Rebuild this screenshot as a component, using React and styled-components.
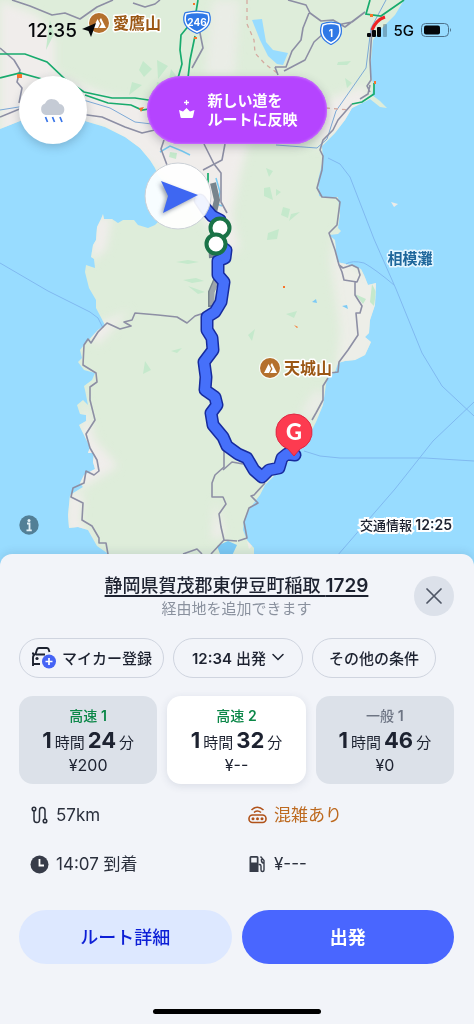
import React from "react";
import styled, { createGlobalStyle } from "styled-components";

const Global = createGlobalStyle`
  *, *::before, *::after { box-sizing: border-box; }
  body { margin: 0; background: #f2f4f9; }
  body, button {
    font-family: Inter, "Noto Sans CJK JP", sans-serif;
    color: #1d2230;
  }
  button { margin: 0; padding: 0; border: 0; background: none; cursor: pointer; }
  svg { display: block; }
`;

const Screen = styled.main`
  display: flex;
  flex-direction: column;
  min-height: 100vh;
`;

/* ---------- map ---------- */

const MapArea = styled.section`
  position: relative;
  flex: 1;
  min-height: 480px;
  display: flex;
  flex-direction: column;
  isolation: isolate;
  overflow: hidden;
  background: #98dcff;
`;

const MapCanvas = styled.svg`
  position: absolute;
  inset: 0;
  z-index: -1;
  width: 100%;
  height: 100%;
`;

const StatusBar = styled.header`
  display: flex;
  align-items: center;
  height: 60px;
  padding: 0 22px 0 28px;
  color: #05070a;
`;

const Clock = styled.time`
  font-size: 19px;
  font-weight: 500;
  margin-right: 5px;
`;

const StatusIcons = styled.div`
  display: flex;
  align-items: center;
  gap: 7px;
  margin-left: auto;
  font-size: 15px;
  font-weight: 500;
`;

const MapControls = styled.div`
  display: grid;
  grid-template-columns: 1fr auto 1fr;
  padding: 16px 19px 0;
`;

const WeatherButton = styled.button`
  display: grid;
  place-items: center;
  width: 68px;
  height: 68px;
  border-radius: 50%;
  background: #fff;
  box-shadow: 0 3px 10px rgba(40, 60, 80, 0.25);
`;

const NewRoadButton = styled.button`
  display: flex;
  align-items: center;
  gap: 12px;
  height: 68px;
  padding: 0 29px 0 31px;
  border-radius: 34px;
  background: #b544ff;
  box-shadow: inset 0 0 2px 1px #c76bff, 0 3px 10px rgba(60, 60, 80, 0.3);
  color: #fff;
  font-size: 15px;
  font-weight: 700;
  line-height: 19px;
  text-align: left;
`;

const MapFooter = styled.div`
  display: flex;
  justify-content: space-between;
  align-items: center;
  margin-top: auto;
  padding: 0 22px 31px 19px;
`;

const InfoButton = styled.button`
  width: 20px;
  height: 20px;
`;

const TrafficTime = styled.span`
  color: #1d2230;
  font-size: 13px;
  font-weight: 500;
  line-height: 20px;
  -webkit-text-stroke: 4px #fff;
  paint-order: stroke fill;

  time {
    font-size: 14px;
    font-weight: 600;
  }
`;

/* ---------- bottom sheet ---------- */

const Sheet = styled.section`
  position: relative;
  margin-top: -12px;
  padding: 20px 20px 10px 19px;
  border-radius: 12px 12px 0 0;
  background: #f2f4f9;
  box-shadow: 0 -2px 8px rgba(30, 60, 90, 0.12);
`;

const SheetHeader = styled.div`
  display: grid;
  grid-template-columns: 40px 1fr 40px;
  align-items: start;
  text-align: center;
`;

const Destination = styled.a`
  color: #1d2230;
  font-size: 18px;
  font-weight: 500;
  line-height: 24px;
  white-space: nowrap;
  text-decoration: underline;
  text-decoration-thickness: 2px;
  text-underline-offset: 3px;

  span {
    font-size: 19px;
    font-weight: 600;
  }
`;

const Headings = styled.div`
  grid-column: 2;
  display: flex;
  flex-direction: column;
  align-items: center;
`;

const Hint = styled.p`
  margin: 0;
  color: #8a919e;
  font-size: 15px;
  line-height: 22px;
`;

const CloseButton = styled.button`
  display: grid;
  place-items: center;
  width: 40px;
  height: 40px;
  margin-top: 2px;
  border-radius: 50%;
  background: #dce1ea;
`;

const Chips = styled.div`
  display: flex;
  gap: 9px;
  margin-top: 18px;
`;

const Chip = styled.button`
  display: flex;
  align-items: center;
  gap: 6px;
  height: 40px;
  padding: 0 ${(p) => p.$pad || 16}px 2px;
  border: 1px solid #cfd4df;
  border-radius: 20px;
  font-size: 15px;
  font-weight: 500;
  white-space: nowrap;

  time {
    font-weight: 600;
  }
`;

const Routes = styled.div`
  display: grid;
  grid-template-columns: repeat(3, 1fr);
  gap: 10px;
  margin-top: 18px;
`;

const RouteCard = styled.button`
  display: flex;
  flex-direction: column;
  align-items: center;
  height: 88px;
  padding: 8px 0;
  border-radius: 14px;
  background: ${(p) => (p.$active ? "#fff" : "#dce1e9")};
  box-shadow: ${(p) => (p.$active ? "0 2px 8px rgba(40, 60, 90, 0.12)" : "none")};
`;

const RouteName = styled.span`
  color: ${(p) => (p.$toll ? "#0b8748" : "#6d7483")};
  font-size: 14px;
  font-weight: 500;
  line-height: 24px;

  b {
    font-weight: 600;
  }
`;

const Duration = styled.span`
  display: flex;
  align-items: baseline;
  gap: 3px;
  font-size: 15px;
  line-height: 24px;
  white-space: nowrap;

  b {
    font-size: 22px;
    font-weight: 700;
  }
`;

const Price = styled.span`
  font-size: 16px;
  line-height: 20px;
`;

const Facts = styled.ul`
  display: grid;
  grid-template-columns: 1fr 1fr;
  gap: 25px 12px;
  margin: 19px 0 0;
  padding: 0 0 0 11px;
  list-style: none;
`;

const Fact = styled.li`
  display: flex;
  align-items: center;
  gap: 7px;
  color: ${(p) => (p.$warn ? "#bd6a20" : "#2b303d")};
  font-size: 17px;
  line-height: 24px;
`;

const Actions = styled.div`
  display: grid;
  grid-template-columns: 1fr 1fr;
  gap: 10px;
  margin-top: 34px;
`;

const ActionButton = styled.button`
  height: 54px;
  padding-bottom: 2px;
  border-radius: 27px;
  background: ${(p) => (p.$primary ? "#4966ff" : "#dde8ff")};
  color: ${(p) => (p.$primary ? "#fff" : "#0d1fd6")};
  font-size: 18px;
  font-weight: ${(p) => (p.$primary ? 700 : 500)};
`;

const HomeIndicator = styled.div`
  width: 168px;
  height: 5px;
  margin: 45px auto 0;
  border-radius: 3px;
  background: #000;
`;

/* ---------- drawings ---------- */

const ROUTE =
  "M200 200L206 209L212 216L220 220L220 228L216 243L226 250L225 258L218 261L218 275L224 282L221 302L215 312L207 317L207 330L212 338L213 350L204 362L206 377L205 390L215 397L217 405L211 413L213 425L223 437L227 446L238 454L247 458L254 470L262 477L269 470L279 468L282 458L287 454L295 455";

function Mountain({ x, y, name }) {
  return (
    <g transform={`translate(${x} ${y})`}>
      <circle r="11" fill="#fff" opacity=".8" />
      <circle r="10" fill="#b4702d" />
      <path d="M-6 5L-1.500-4L1 .500L-1 5ZM0 5L2.500 1L.500-3L2-5L7 5Z" fill="#fff" />
      <text
        x="14"
        y="6"
        fontSize="16"
        fontWeight="700"
        fill="#9b5714"
        stroke="#fff"
        strokeWidth="3"
        strokeLinejoin="round"
        paintOrder="stroke"
      >
        {name}
      </text>
    </g>
  );
}

function Shield({ x, y, w, label }) {
  const outline = `M${-w}-8Q0-11 ${w}-8Q${w + 4} 4 0 10Q${-w - 4} 4 ${-w}-8Z`;
  return (
    <g transform={`translate(${x} ${y})`} strokeLinejoin="round">
      <path d={outline} fill="#2f78e6" stroke="#2f78e6" strokeWidth="4" />
      <path d={outline} fill="#2f78e6" stroke="#fff" strokeWidth="1.500" />
      <text y="4" textAnchor="middle" fontSize="10" fontWeight="700" fill="#fff">
        {label}
      </text>
    </g>
  );
}

function IzuMap() {
  return (
    <MapCanvas viewBox="0 0 474 566" preserveAspectRatio="xMidYMin slice" role="img" aria-label="地図">
      <defs>
        <filter id="soft" x="-20%" y="-20%" width="140%" height="140%">
          <feGaussianBlur stdDeviation="5" />
        </filter>
        <filter id="shade" x="-20%" y="-20%" width="140%" height="140%">
          <feGaussianBlur stdDeviation="2" />
        </filter>
        <clipPath id="land">
          <path d="M0 0H404L395 15L381 29L373 40L371 60L370 75L374 85L372 95L380 101L387 108L380 107L370 99L352 108L345 120L335 133L322 146L323 160L318 180L319 196L326 198L338 197L340 215L338 228L341 231L338 234L329 235L335 240L337 262L350 265L361 269L364 275L368 285L376 283L375 305L370 320L369 333L365 337L371 342L365 355L355 360L345 361L338 363L335 372L327 378L323 405L316 422L312 430L300 440L295 456L285 465L265 485L260 495L250 508L244 520L243 530L247 540L254 548L254 566H110L107 553L97 546L88 530L78 527L69 528L68 515L70 495L83 487L80 483L84 475L95 469L93 462L94 453L88 453L90 447L84 435L79 425L86 421L86 415L80 414L77 405L83 400L88 405L85 390L84 386L92 380L95 373L84 370L78 362L82 358L80 350L84 345L98 330L105 325L96 308L96 300L89 288L85 272L86 265L95 268L94 259L91 257L93 245L96 240L97 227L101 219L103 214L104 219L112 219L118 223L123 220L134 220L138 225L148 228L155 225L175 205L172 192L158 175L155 168L150 160L140 148L125 137L105 127L85 121L55 116L20 121L0 129Z" />
        </clipPath>
      </defs>
      <rect width="474" height="566" fill="#98dcff" />
      <g clipPath="url(#land)">
        <rect width="474" height="566" fill="#deedda" />
        <g fill="#f0edeb" filter="url(#soft)">
          <path d="M0 0L38 15L55 40L55 72L85 86L110 96L155 104L235 108L250 138L240 175L232 215L240 250L222 250L190 200L150 165L100 125L0 135Z" />
          <path d="M212 0H240L235 75H205Z" opacity=".7" />
          <path d="M330 98L365 85L370 112L340 130L315 150L320 120Z" />
          <path d="M335 230L358 270L385 280L378 345L370 365L335 375L340 330L330 260Z" opacity=".8" />
          <path d="M315 390L330 395L315 420L300 412Z" opacity=".7" />
          <path d="M95 215L112 217L106 250L90 262ZM85 330L130 310L98 345ZM85 400L95 440L118 466L80 490L76 475Z" />
          <path d="M68 490L84 495L80 520L95 545L66 530ZM215 500L225 535L212 540Z" />
        </g>
        <g fill="#c5e9cc">
          <path d="M143 61L152 69L144 77L139 70ZM157 60L168 66L158 79ZM171 69L179 79L168 84ZM132 82L142 85L129 95ZM157 82L168 85L155 96ZM168 88L178 96L170 98ZM50 20L54 34L46 50L48 32ZM170 152L177 153L176 159L169 157Z" />
          <path d="M338 62L351 61L347 65L337 65ZM345 78L352 83L347 88ZM266 168L273 171L269 177ZM264 188L270 187L273 200L264 196ZM276 189L281 192L276 196ZM283 207L290 209L288 218L281 215ZM291 214L300 212L289 221ZM268 233L279 229L277 239L267 240Z" />
          <path d="M176 262L188 260L199 262L188 264ZM183 280L196 278L204 281L192 283ZM188 286L205 292L198 294ZM145 361L151 370L143 374ZM171 351L182 348L177 353ZM372 284L376 292L374 306L370 302ZM355 294L366 299L363 304ZM286 314L297 311L294 318ZM248 335L255 329L252 341Z" />
        </g>
        <path d="M252 20L262 19L266 42L273 50L288 53L283 65L277 64L268 56L260 40Z" fill="#98dcff" />
        <path d="M312 302L316 299L317 303ZM342 306L347 305L348 309ZM217 546L228 541L237 545L230 560L220 554Z" fill="#7ccaf5" />
      </g>
      <path d="M391 202L398 204L394 207ZM247 541L252 546L249 549Z" fill="#eeece8" />

      <g fill="none" stroke="#80b9f0" strokeWidth="1">
        <path d="M0 263L48 291L90 312L98 318L103 328" />
        <path d="M328 158L340 164L350 177L374 239L396 289L422 353L442 386L474 416" />
        <path d="M346 264Q352 260 364 263Q375 269 394 285" />
        <path d="M304 451L320 456L340 458H425L474 461M474 402L433 441L395 489L337 556" />
        <path d="M0 110L25 106M80 99L110 108L135 122L160 125M276 145L317 148L327 139L336 111L366 68L371 28L386 0" stroke="#7ca9d6" />
      </g>
      <path d="M160 152L170 146L182 151L190 155M216 178L220 192L217 204L222 206" fill="none" stroke="#78cbf2" strokeWidth="1.500" />
      <path d="M247 0V24L254 40L255 53L265 64L280 75M326 108L350 110" fill="none" stroke="#d4aaa0" strokeWidth="1.300" strokeDasharray="4 4" />
      <g fill="none" stroke="#8d8fa4" strokeWidth="1.600" strokeLinejoin="round">
        <path d="M12 0L30 6L52 15L65 13L80 19L97 7L113 0M133 3L145 7L155 4L160 0M0 48L14 60L20 70L17 82L22 88L19 103M0 117L22 108M80 114L102 117L125 127L142 133L159 129M199 28L203 48L192 68M164 140L161 149L167 165M204 144L214 164L221 173L221 202L227 213M225 144L222 160L203 170" />
        <path d="M288 0L306 5L310 13L321 21L333 20L345 27L365 12M309 13L303 28L301 40L292 51L286 67H275M275 67L278 75M365 12L352 22L332 26L314 42L305 60L284 71" />
        <path d="M372 28L370 60L371 80L367 86L370 92M352 104L338 120L333 130L323 140L320 150L323 156L322 170L317 188L322 197L336 198L340 202L337 225L329 233L335 250L339 265L343 268L352 265L358 268L360 275L357 282L344 280L342 272L339 265M355 282L355 295L362 306L360 313L356 313L358 335L348 350L339 362L338 372L330 373M328 378L323 386L323 400L316 413L312 420M265 483L254 495L251 496L258 503L249 508L244 522L247 538L238 541M370 85L368 94L360 99" />
        <path d="M204 313L195 316L187 323L177 317L158 315L135 313L132 320L124 322L131 326L120 329L107 323L98 332L91 343L88 339L84 345L83 365L96 373L97 382L90 387L90 400L95 420L86 434L90 448L97 460L99 471L94 475L86 471L84 483L73 488L71 497L83 503L82 520L92 526L99 538L99 543H106L109 560" />
        <path d="M224 450V467L215 475L212 483V497H223L226 504L219 514L221 527L224 540L211 554M183 554L197 549L202 554M223 470L232 462L243 464M224 540L237 541" />
      </g>
      <path d="M213 183L217 200L214 212M211 240L212 258M217 278L211 292L211 307" fill="none" stroke="#78858d" strokeWidth="6" />
      <path d="M217 280L212 292L212 305" fill="none" stroke="#9da5ab" strokeWidth="5" />
      <g fill="none" stroke="#18ab6d" strokeWidth="1.700">
        <path d="M0 54L25 54L47 62L65 79L84 92L112 98H135L155 101M0 78L20 73L42 79M85 95L108 103L131 105L142 110L155 108M198 0L195 18L181 35L180 50L182 64L178 78M195 36L190 60L188 78M370 0L366 14L381 16L404 0M374 83L374 94L362 102L352 104M208 173V184" />
      </g>
      <path d="M372 30Q376 20 385 17" fill="none" stroke="#f02424" strokeWidth="3" />
      <g fill="#f8742a">
        <path d="M17 74H22V78H17ZM139 108L144 107L141 112ZM193 3H195V5H193ZM194 37H197V39H194ZM370 14H373V17H370ZM374 81H376V84H374ZM283 286H285V288H283ZM294 325L298 327L297 328Z" />
      </g>

      <g fill="none" strokeLinejoin="round" strokeLinecap="round">
        <path d={ROUTE} stroke="#172b9d" strokeWidth="13" />
        <path d={ROUTE} stroke="#4670fa" strokeWidth="10" />
      </g>
      <circle cx="178" cy="196" r="33" fill="#fff" fillOpacity=".92" stroke="#cbd0d6" />
      <path d="M159 183L196 197L161 215L166 198Z" fill="#6f7987" opacity=".7" filter="url(#shade)" />
      <path d="M161 181L198 195L163 213L168 196Z" fill="#3e67f2" />
      <circle cx="220" cy="228" r="9.500" fill="#fff" stroke="#1a7347" strokeWidth="4" />
      <circle cx="216" cy="244" r="9.500" fill="#fff" stroke="#1a7347" strokeWidth="4" />
      <path d="M294 414A18 18 0 0 1 300 449L294 456L288 449A18 18 0 0 1 294 414Z" fill="#fd3b50" stroke="#dc2944" />
      <text x="294" y="440" textAnchor="middle" fontSize="22" fontWeight="900" fontFamily="Lato, sans-serif" fill="#fff">
        G
      </text>

      <Mountain x={99} y={23} name="愛鷹山" />
      <Mountain x={270} y={368} name="天城山" />
      <Shield x={197} y={22} w={11} label="246" />
      <Shield x={331} y={33} w={8} label="1" />
      <text x="410" y="264" textAnchor="middle" fontSize="15" fontWeight="700" fill="#1d669b" stroke="#e3f5ff" strokeWidth="3" strokeLinejoin="round" paintOrder="stroke">
        相模灘
      </text>
    </MapCanvas>
  );
}

const LocationArrow = () => (
  <svg width="14" height="14" viewBox="0 0 14 14" fill="#05070a">
    <path d="M14 0L9 14L6.500 8L0 6Z" />
  </svg>
);

const Signal = () => (
  <svg width="20" height="13" viewBox="0 0 20 13" fill="#05070a">
    <rect y="9" width="4" height="4" rx="1" />
    <rect x="5" y="6" width="4" height="7" rx="1" />
    <rect x="10" y="3" width="4" height="10" rx="1" />
    <rect x="16" width="4" height="13" rx="1" opacity=".25" />
  </svg>
);

const Battery = () => (
  <svg width="31" height="14" viewBox="0 0 31 14">
    <rect x=".5" y=".5" width="27" height="13" rx="4" fill="none" stroke="#4c718a" />
    <rect x="3" y="2.500" width="16" height="9" rx="2" fill="#05070a" />
    <path d="M29 5Q31 7 29 9Z" fill="#4c718a" />
  </svg>
);

const RainCloud = () => (
  <svg width="26" height="26" viewBox="0 0 26 26">
    <path d="M6 18A6 6 0 0 1 5 6.500A8 8 0 0 1 19.500 7A5.600 5.600 0 0 1 20 18Z" fill="#c5cbd5" />
    <path d="M5.500 20L7.500 25M12.500 20L14.500 25M20 20L22 25" stroke="#3975e8" strokeWidth="1.700" />
  </svg>
);

const Crown = () => (
  <svg width="17" height="20" viewBox="0 0 17 20" fill="#fff">
    <path d="M8.500 0V5M6 2.500H11" stroke="#fff" strokeWidth="1.300" />
    <path d="M1 10L5 11.500L8.500 8L12 11.500L16.500 10L15 17Q14.800 18 14 18H3.500Q2.700 18 2.500 17Z" />
  </svg>
);

const InfoIcon = () => (
  <svg width="20" height="20" viewBox="0 0 20 20">
    <circle cx="10" cy="10" r="9.700" fill="#527f96" />
    <circle cx="10" cy="5.500" r="1.500" fill="#e3f1f7" />
    <path d="M8 8.500H10.500V15M7.500 15.300H12.800" fill="none" stroke="#e3f1f7" strokeWidth="1.800" />
  </svg>
);

const CloseIcon = () => (
  <svg width="16" height="16" viewBox="0 0 16 16">
    <path d="M1 1L15 15M15 1L1 15" stroke="#4f5665" strokeWidth="1.700" strokeLinecap="round" />
  </svg>
);

const CarPlus = () => (
  <svg width="25" height="23" viewBox="0 0 25 23" fill="none">
    <path
      d="M18.500 6L17.500 3Q17 2 16 2H8Q6.500 2 6 3.500L4.500 8Q2 9 2 11.500V20M2 18H9M5 8.500H14M1 7.500H3"
      stroke="#1d2230"
      strokeWidth="1.900"
    />
    <circle cx="6" cy="12.500" r="1.600" fill="#1d2230" />
    <circle cx="18" cy="15.500" r="7" fill="#4563f5" />
    <path d="M18 12V19M14.500 15.500H21.500" stroke="#fff" strokeWidth="1.700" />
  </svg>
);

const ChevronDown = () => (
  <svg width="12" height="8" viewBox="0 0 12 8">
    <path d="M1 1.500L6 6.500L11 1.500" fill="none" stroke="#1d2230" strokeWidth="1.500" strokeLinecap="round" />
  </svg>
);

const DistanceIcon = () => (
  <svg width="19" height="18" viewBox="0 0 19 18" fill="none" stroke="#292e3a" strokeWidth="1.500">
    <circle cx="4" cy="3" r="1.800" />
    <circle cx="15" cy="15" r="1.800" />
    <path d="M4 5V13.500Q4 16.500 6.800 16.500T9.500 13.500V4.500Q9.500 1.500 12.200 1.500T15 4.500V13" />
  </svg>
);

const CongestionIcon = () => (
  <svg width="19" height="18" viewBox="0 0 19 18" fill="none" stroke="#b0521a" strokeWidth="1.600">
    <path d="M3.500 4Q9.500-1.500 15.500 4M6 6.500Q9.500 3.500 13 6.500" />
    <rect x="1" y="9" width="17" height="7.500" rx="3.500" />
    <g fill="#b0521a" stroke="none">
      <circle cx="5" cy="12.750" r="1.500" />
      <circle cx="9.500" cy="12.750" r="1.500" />
      <circle cx="14" cy="12.750" r="1.500" />
    </g>
  </svg>
);

const ClockIcon = () => (
  <svg width="19" height="19" viewBox="0 0 19 19">
    <circle cx="9.500" cy="9.500" r="9" fill="#373c49" />
    <path d="M9.500 4V10.500H14" fill="none" stroke="#fff" strokeWidth="1.800" />
  </svg>
);

const FuelIcon = () => (
  <svg width="19" height="18" viewBox="0 0 19 18">
    <path d="M3 1H9Q10.500 1 10.500 2.500V17H1.500V2.500Q1.500 1 3 1ZM3.200 2.700V7.500H8.800V2.700Z" fill="#373c49" fillRule="evenodd" />
    <path d="M10.500 9.500H11.500Q13 9.500 13 11V15Q13 16.500 14.500 16.500T16 15V5.500L12.500 1.500M16 8H15Q13 7 13.500 4" fill="none" stroke="#373c49" strokeWidth="1.400" />
  </svg>
);

const ROUTES = [
  { road: "高速", index: 1, toll: true, minutes: 24, price: "¥200" },
  { road: "高速", index: 2, toll: true, minutes: 32, price: "¥--", active: true },
  { road: "一般", index: 1, toll: false, minutes: 46, price: "¥0" },
];

export default function App() {
  return (
    <Screen>
      <Global />
      <MapArea>
        <IzuMap />
        <StatusBar>
          <Clock>12:35</Clock>
          <LocationArrow />
          <StatusIcons>
            <Signal />
            <span>5G</span>
            <Battery />
          </StatusIcons>
        </StatusBar>
        <MapControls>
          <WeatherButton aria-label="天気">
            <RainCloud />
          </WeatherButton>
          <NewRoadButton>
            <Crown />
            <span>
              新しい道を
              <br />
              ルートに反映
            </span>
          </NewRoadButton>
        </MapControls>
        <MapFooter>
          <InfoButton aria-label="情報">
            <InfoIcon />
          </InfoButton>
          <TrafficTime>
            交通情報 <time>12:25</time>
          </TrafficTime>
        </MapFooter>
      </MapArea>

      <Sheet>
        <SheetHeader>
          <Headings>
            <Destination href="#destination">
              静岡県賀茂郡東伊豆町稲取 <span>1729</span>
            </Destination>
            <Hint>経由地を追加できます</Hint>
          </Headings>
          <CloseButton aria-label="閉じる">
            <CloseIcon />
          </CloseButton>
        </SheetHeader>

        <Chips>
          <Chip $pad={11}>
            <CarPlus />
            マイカー登録
          </Chip>
          <Chip $pad={18}>
            <span>
              <time>12:34</time> 出発
            </span>
            <ChevronDown />
          </Chip>
          <Chip>その他の条件</Chip>
        </Chips>

        <Routes>
          {ROUTES.map((r) => (
            <RouteCard key={r.road + r.index} $active={r.active} aria-pressed={Boolean(r.active)}>
              <RouteName $toll={r.toll}>
                {r.road} <b>{r.index}</b>
              </RouteName>
              <Duration>
                <b>1</b>時間 <b>{r.minutes}</b> 分
              </Duration>
              <Price>{r.price}</Price>
            </RouteCard>
          ))}
        </Routes>

        <Facts>
          <Fact>
            <DistanceIcon />
            57km
          </Fact>
          <Fact $warn>
            <CongestionIcon />
            混雑あり
          </Fact>
          <Fact>
            <ClockIcon />
            14:07 到着
          </Fact>
          <Fact>
            <FuelIcon />
            ¥---
          </Fact>
        </Facts>

        <Actions>
          <ActionButton>ルート詳細</ActionButton>
          <ActionButton $primary>出発</ActionButton>
        </Actions>
        <HomeIndicator />
      </Sheet>
    </Screen>
  );
}
